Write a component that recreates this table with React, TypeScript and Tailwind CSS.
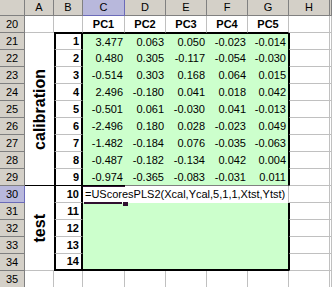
import React from "react";

const HDR = "bg-[#d4d0c8] border-r border-b border-[#808080] flex items-center justify-center text-[11px] leading-none text-black";
const HDR_ON = "bg-[#b8b8dc] border-r border-b border-[#6b6bb8] flex items-center justify-center text-[11px] leading-none text-black";
const CELL = "bg-white border-r border-b border-[#c0c0c0]";
const NUM = "flex items-center justify-end pr-[2px] text-[11px] leading-none";

const data: string[][] = [
  ["3.477", "0.063", "0.050", "-0.023", "-0.014"],
  ["0.480", "0.305", "-0.117", "-0.054", "-0.030"],
  ["-0.514", "0.303", "0.168", "0.064", "0.015"],
  ["2.496", "-0.180", "0.041", "0.018", "0.042"],
  ["-0.501", "0.061", "-0.030", "0.041", "-0.013"],
  ["-2.496", "0.180", "0.028", "-0.023", "0.049"],
  ["-1.482", "-0.184", "0.076", "-0.035", "-0.063"],
  ["-0.487", "-0.182", "-0.134", "0.042", "0.004"],
  ["-0.974", "-0.365", "-0.083", "-0.031", "0.011"],
];

export default function App() {
  const cells: React.ReactNode[] = [];
  // column header row
  cells.push(<div key="corner" className={HDR} />);
  ["A", "B", "C", "D", "E", "F", "G", "H", ""].forEach((c) => {
    cells.push(
      <div key={"h" + c} className={c === "C" ? HDR_ON : HDR}>
        {c}
      </div>
    );
  });

  // row 20
  cells.push(<div key="r20" className={HDR}>20</div>);
  cells.push(<div key="a20" className={CELL} />);
  cells.push(<div key="b20" className="bg-white border-r border-[#c0c0c0] border-b border-b-black" />);
  ["PC1", "PC2", "PC3", "PC4", "PC5"].forEach((p) => {
    cells.push(
      <div key={p} className="bg-white border-r border-[#c0c0c0] border-b border-b-black flex items-center justify-center font-bold text-[11px] leading-none">
        {p}
      </div>
    );
  });
  cells.push(<div key="h20" className={CELL} />);
  cells.push(<div key="i20" className={CELL} />);

  // rows 21-29
  data.forEach((row, i) => {
    const n = 21 + i;
    const first = i === 0;
    const last = i === data.length - 1;
    cells.push(<div key={"r" + n} className={HDR}>{n}</div>);
    if (first) {
      cells.push(
        <div key="calib" className="row-span-9 bg-white border-b border-b-black flex items-center justify-center">
          <span className="[writing-mode:vertical-rl] rotate-180 font-bold text-[16px] leading-none">calibration</span>
        </div>
      );
    }
    cells.push(
      <div
        key={"b" + n}
        className={
          "bg-white border-l-2 border-r-2 border-l-black border-r-black font-bold " +
          NUM +
          " pr-[1px] " +
          (first ? "border-t border-t-black " : "") +
          (last ? "border-b border-b-black" : "border-b border-b-[#c0c0c0]")
        }
      >
        {i + 1}
      </div>
    );
    row.forEach((v, j) => {
      cells.push(
        <div
          key={"v" + n + j}
          className={
            "bg-[#ccffcc] " +
            NUM +
            " " +
            (first ? "border-t border-t-black " : "") +
            (j === 4 ? "border-r border-r-black " : "") +
            (last ? (j === 0 ? "border-b border-b-black" : "border-b border-b-[#808080]") : "")
          }
        >
          {v}
        </div>
      );
    });
    cells.push(<div key={"h" + n} className={CELL + " border-l border-l-black"} />);
    cells.push(<div key={"i" + n} className={CELL} />);
  });

  // row 30
  cells.push(<div key="r30" className={HDR_ON}>30</div>);
  cells.push(
    <div key="test" className="row-span-5 bg-white border-b border-b-[#c0c0c0] flex items-center justify-center">
      <span className="[writing-mode:vertical-rl] rotate-180 font-bold text-[16px] leading-none">test</span>
    </div>
  );
  cells.push(
    <div key="b30" className={"bg-white border-l-2 border-r-2 border-l-black border-r-black border-b border-b-[#c0c0c0] font-bold " + NUM + " pr-[1px]"}>
      10
    </div>
  );
  cells.push(
    <div key="c30" className="col-span-5 relative bg-white border-r border-[#c0c0c0] flex items-center pl-[2px] text-[11px] leading-none whitespace-nowrap">
      =UScoresPLS2(Xcal,Ycal,5,1,1,Xtst,Ytst)
      <div className="absolute left-0 top-0 w-[42px] h-px bg-[#301030]" />
      <div className="absolute z-10 left-[1px] top-[16px] w-[38px] h-[2px] bg-[#301030]" />
      <div className="absolute z-10 left-[40px] top-[16px] w-[5px] h-[4px] bg-[#301030]" />
    </div>
  );
  cells.push(<div key="h30" className={CELL} />);
  cells.push(<div key="i30" className={CELL} />);

  // rows 31-34
  [31, 32, 33, 34].forEach((n, i) => {
    const last = i === 3;
    cells.push(<div key={"r" + n} className={HDR}>{n}</div>);
    cells.push(
      <div
        key={"b" + n}
        className={
          "bg-white border-l-2 border-r-2 border-l-black border-r-black font-bold " +
          NUM +
          " pr-[1px] " +
          (last ? "border-b-2 border-b-black" : "border-b border-b-[#c0c0c0]")
        }
      >
        {n - 20}
      </div>
    );
    [0, 1, 2, 3, 4].forEach((j) => {
      cells.push(
        <div
          key={"g" + n + j}
          className={
            "bg-[#ccffcc] " + (j === 4 ? "border-r border-r-black " : "") + (last ? "border-b-2 border-b-black" : "")
          }
        />
      );
    });
    cells.push(<div key={"h" + n} className={CELL + " border-l border-l-black"} />);
    cells.push(<div key={"i" + n} className={CELL} />);
  });

  // row 35
  cells.push(<div key="r35" className={HDR}>35</div>);
  for (let k = 0; k < 9; k++) cells.push(<div key={"z" + k} className={CELL} />);

  return (
    <div className="w-[332px] h-[287px] overflow-hidden bg-white font-['Liberation_Sans',Arial,sans-serif] text-black">
      <div className="grid grid-cols-[25px_29px_29px_42px_41px_41px_41px_41px_41px_1fr] grid-rows-[16px_repeat(16,17px)]">
        {cells}
      </div>
    </div>
  );
}
